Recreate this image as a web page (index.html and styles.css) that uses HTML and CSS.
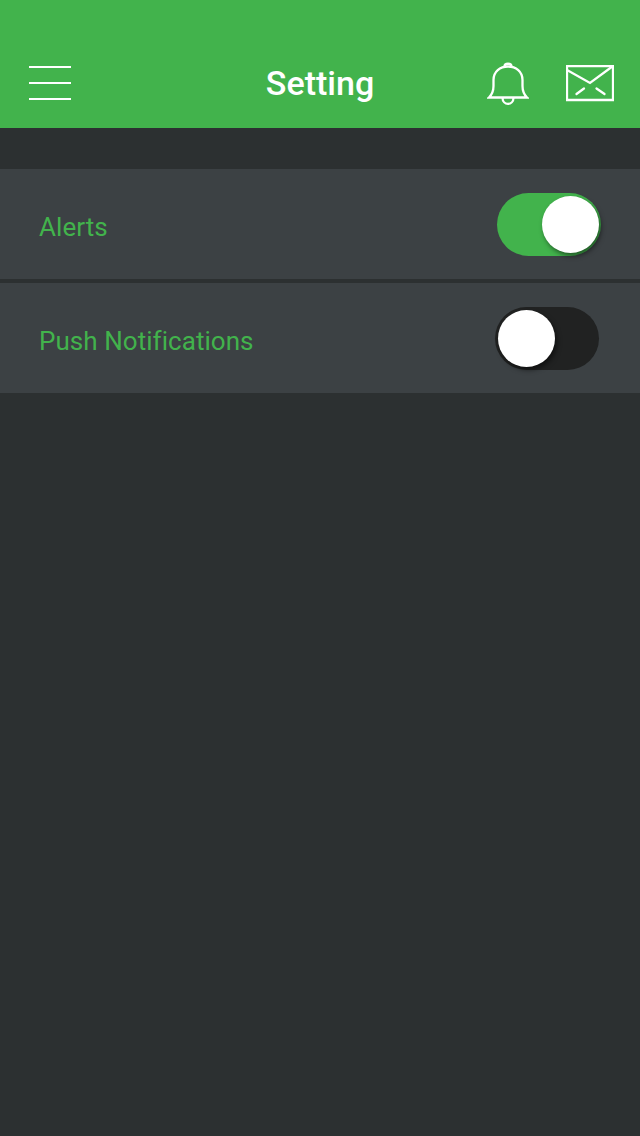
FILE: index.html
```html
<!DOCTYPE html>
<html lang="en">
<head>
<meta charset="utf-8">
<title>Setting</title>
<link rel="stylesheet" href="styles.css">
</head>
<body>
<div class="app">
  <header class="header">
    <div class="side side-left">
      <div class="menu"><span class="bar"></span><span class="bar"></span><span class="bar"></span></div>
    </div>
    <h1 class="title">Setting</h1>
    <div class="side side-right">
      <svg class="bell" width="42" height="44" viewBox="0 0 42 44" fill="none" stroke="#fff" stroke-width="2.300">
        <path d="M2 35.500H40C36.500 32 35.500 29 35.500 24V18C35.500 9.500 29 4.500 21 4.500C13 4.500 6.500 9.500 6.500 18V24C6.500 29 5.500 32 2 35.500Z"/>
        <path d="M17.500 4.500C17.500 0.800 24.500 0.800 24.500 4.500"/>
        <path d="M15.500 35.500C15.500 44 26.500 44 26.500 35.500"/>
      </svg>
      <svg class="mail" width="48" height="37" viewBox="0 0 48 37" fill="none" stroke="#fff" stroke-width="2.300">
        <path d="M1 1H47V35H1Z"/>
        <path d="M1 5L24 18L47 1"/>
        <path d="M10.500 29L18 23.500M30.500 23.500L38.500 29" stroke-linecap="round"/>
      </svg>
    </div>
  </header>
  <main class="list">
    <section class="row">
      <span class="label">Alerts</span>
      <div class="toggle toggle-on"><span class="knob"></span></div>
    </section>
    <section class="row">
      <span class="label">Push Notifications</span>
      <div class="toggle toggle-off"><span class="knob"></span></div>
    </section>
  </main>
</div>
</body>
</html>
```
FILE: styles.css
```css
* { box-sizing: border-box; }
html, body { margin: 0; padding: 0; height: 100%; }
body { background: #2c3031; font-family: Roboto, sans-serif; overflow: hidden; }
.app { height: 1136px; display: flex; flex-direction: column; }
.header {
  height: 128px;
  flex: none;
  background: #42b34c;
  display: flex;
  align-items: flex-start;
  justify-content: space-between;
  padding: 0 26px 0 29px;
}
.side { display: flex; }
.side-left { width: 157px; padding-top: 66px; }
.side-right { width: 160px; justify-content: flex-end; align-items: flex-start; padding-top: 62px; gap: 37px; }
.menu { width: 42px; display: flex; flex-direction: column; gap: 14px; }
.bar { display: block; height: 2px; background: #fff; }
.title {
  margin: 0;
  padding-top: 64px;
  color: #fff;
  font-size: 34px;
  line-height: 38px;
  font-weight: 500;
}
.bell { display: block; }
.mail { display: block; margin-top: 3px; }
.list { padding-top: 41px; display: flex; flex-direction: column; gap: 4px; }
.row {
  height: 110px;
  background: #3c4144;
  padding: 0 39px;
  display: flex;
  align-items: center;
  justify-content: space-between;
}
.label { color: #42b34c; font-size: 26px; line-height: 30px; padding-top: 6px; letter-spacing: 0.05px; }
.toggle {
  width: 104px;
  height: 63px;
  border-radius: 32px;
  display: flex;
  align-items: center;
}
.toggle-on { background: #42b34c; justify-content: flex-end; padding-right: 2px; }
.toggle-off { background: #212222; margin-right: 2px; padding-left: 3px; }
.knob {
  display: block;
  width: 57px;
  height: 57px;
  border-radius: 50%;
  background: #fff;
  box-shadow: 2px 3px 5px rgba(0, 0, 0, 0.5);
}
```
